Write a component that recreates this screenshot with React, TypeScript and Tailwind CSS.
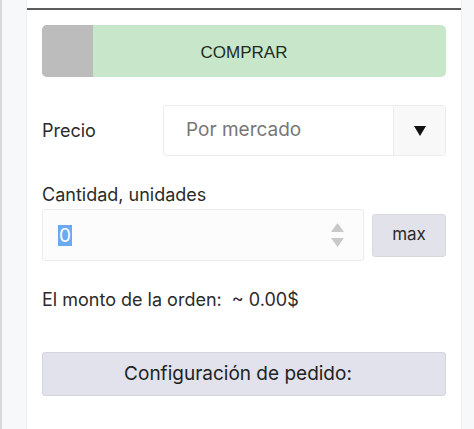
export default function App() {
  return (
    <div className="flex h-[429px] w-[474px] bg-[#f7f8fa] font-['Inter',sans-serif] text-[#222]">
      {/* left rail */}
      <div className="w-[26px] border-l-2 border-[#d9dae0] bg-[#f7f8fa]" />

      {/* panel */}
      <div className="flex w-[436px] flex-col border-x border-[#eceef2] bg-white">
        <div className="mt-[8px] h-[2px] bg-[#5c5c5c]" />

        <div className="flex flex-col px-[15px] pt-[15px]">
          {/* buy toggle */}
          <div className="grid h-[52px] overflow-hidden rounded-[5px] bg-[#c8e6c9]">
            <div className="col-start-1 row-start-1 w-[51px] bg-[#bcbcbc]" />
            <div className="col-start-1 row-start-1 flex items-center justify-center pt-[3px] font-['Liberation_Sans',Arial,sans-serif] text-[17px] text-[#1f2a1f]">
              COMPRAR
            </div>
          </div>

          {/* price */}
          <div className="mt-[28px] flex items-center">
            <div className="w-[121px] text-[18px] text-[#2b2b2b]">Precio</div>
            <div className="flex h-[51px] flex-1 rounded-[3px] border border-[#ececec]">
              <div className="flex flex-1 items-center pl-[22px] text-[19px] text-[#777]">Por mercado</div>
              <div className="flex w-[52px] items-center justify-center border-l border-[#ececec] bg-[#f8f8f8]">
                <svg width="12" height="10" viewBox="0 0 12 10">
                  <path d="M0 0h12L6 10z" fill="#111" />
                </svg>
              </div>
            </div>
          </div>

          {/* quantity */}
          <div className="mt-[28px] text-[18px] leading-[22px] text-[#2b2b2b]">Cantidad, unidades</div>
          <div className="mt-[3px] flex items-center gap-[8px]">
            <div className="flex h-[52px] flex-1 items-center rounded-[3px] border border-[#ececec] bg-[#fcfcfc]">
              <span className="ml-[15px] bg-[#6ba9f0] px-[1px] text-[19px] leading-[21px] text-white">0</span>
              <div className="ml-auto mr-[19px] flex flex-col gap-[6px]">
                <svg width="13" height="9" viewBox="0 0 13 9">
                  <path d="M6.5 0L13 9H0z" fill="#c9c9c9" />
                </svg>
                <svg width="13" height="9" viewBox="0 0 13 9">
                  <path d="M0 0h13L6.5 9z" fill="#c9c9c9" />
                </svg>
              </div>
            </div>
            <div className="flex h-[43px] w-[74px] items-center justify-center rounded-[3px] border border-[#d8d9e0] bg-[#e1e2ea] text-[17px] text-[#2b2b2b]">
              max
            </div>
          </div>

          {/* total */}
          <div className="mt-[27px] text-[18px] leading-[24px] text-[#2b2b2b]">
            El monto de la orden:&nbsp; ~ 0.00$
          </div>

          {/* settings */}
          <div className="mt-[40px] flex h-[44px] items-center justify-center rounded-[3px] border border-[#d4d5dc] bg-[#e1e2eb] pr-[12px] text-[19px] text-[#222]">
            Configuración de pedido:
          </div>
        </div>
      </div>

      {/* right rail */}
      <div className="flex-1 bg-[#f7f8fa]" />
    </div>
  )
}
